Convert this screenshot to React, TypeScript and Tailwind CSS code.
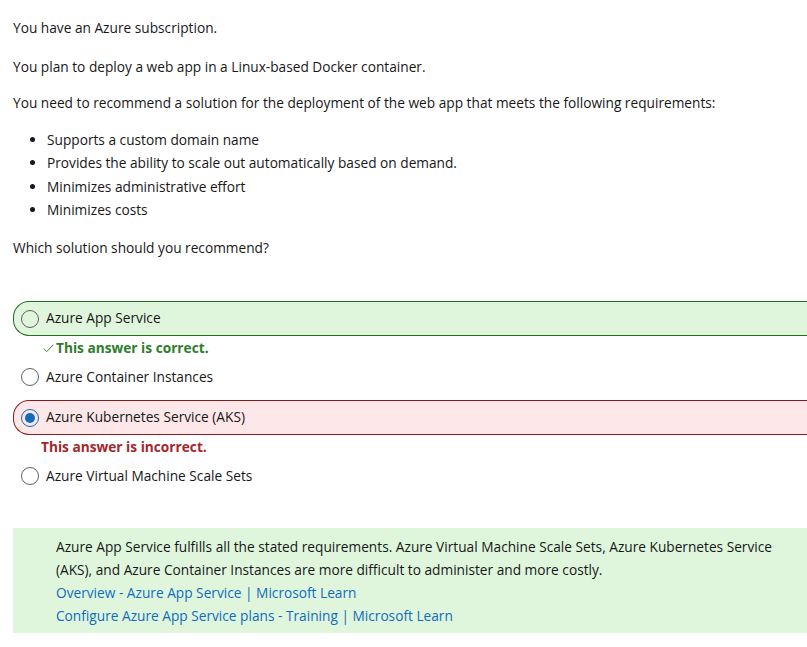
import { ReactNode } from 'react'

const requirements = [
  'Supports a custom domain name',
  'Provides the ability to scale out automatically based on demand.',
  'Minimizes administrative effort',
  'Minimizes costs',
]

function Radio({ checked }: { checked?: boolean }) {
  if (checked) {
    return (
      <span className="flex justify-center items-center border-[1.5px] border-[#0f6cbd] rounded-full w-[18px] h-[18px] shrink-0">
        <span className="bg-[#0f6cbd] rounded-full w-[10px] h-[10px]" />
      </span>
    )
  }
  return <span className="border border-[#616161] rounded-full w-[18px] h-[18px] shrink-0" />
}

function Option({ label, checked, className }: { label: string; checked?: boolean; className?: string }) {
  return (
    <div className={`flex flex-row items-center gap-[7px] ${className ?? ''}`}>
      <Radio checked={checked} />
      <span>{label}</span>
    </div>
  )
}

function Feedback({ children, className }: { children: ReactNode; className?: string }) {
  return (
    <div className={`flex flex-row items-center h-[24px] font-bold ${className ?? ''}`}>
      {children}
    </div>
  )
}

export default function App() {
  return (
    <div
      className="bg-white pt-[18px] pl-[13px] w-[807px] h-[647px] overflow-hidden text-[#171717] text-[13.7px]"
      style={{ fontFamily: '"Open Sans", "Noto Sans", sans-serif' }}>

      <p className="mb-[19px] leading-5">You have an Azure subscription.</p>
      <p className="mb-[16px] leading-5">You plan to deploy a web app in a Linux-based Docker container.</p>
      <p className="mb-[15px] leading-5">
        You need to recommend a solution for the deployment of the web app that meets the following requirements:
      </p>

      <ul className="mb-[17px] pl-[34px] list-disc">
        {requirements.map(r => (
          <li key={r} className="leading-[23.3px]">{r}</li>
        ))}
      </ul>

      <p className="mb-[43px] leading-5">Which solution should you recommend?</p>

      {/* answers */}
      <div className="flex flex-col">
        <Option
          label="Azure App Service"
          className="bg-[#dff6dd] pl-[7px] border border-[#1f6f1f] border-r-0 rounded-l-[16px] h-[35px]" />
        <Feedback className="pl-[30px] text-[#2d7d2d]">
          <svg width="11" height="9" viewBox="0 0 11 9" className="mr-[2px]">
            <path d="M0.8 4.6 L3.8 7.6 L10.2 0.8" fill="none" stroke="#2d7d2d" strokeWidth="1" />
          </svg>
          This answer is correct.
        </Feedback>
        <Option label="Azure Container Instances" className="mb-[6px] pl-[8px] h-[34px]" />
        <Option
          label="Azure Kubernetes Service (AKS)"
          checked
          className="bg-[#fde7e9] pl-[7px] border border-[#8e1b1b] border-r-0 rounded-l-[16px] h-[35px]" />
        <Feedback className="pl-[28px] text-[#a4262c]">This answer is incorrect.</Feedback>
        <Option label="Azure Virtual Machine Scale Sets" className="pl-[8px] h-[34px]" />
      </div>

      {/* explanation */}
      <div className="bg-[#dff6dd] mt-[35px] pt-[7px] pr-[10px] pb-[6px] pl-[43px] leading-[23px]">
        <p>
          Azure App Service fulfills all the stated requirements. Azure Virtual Machine Scale Sets, Azure Kubernetes Service
          (AKS), and Azure Container Instances are more difficult to administer and more costly.
        </p>
        <a className="block text-[#0f6cbd]" href="#">Overview - Azure App Service | Microsoft Learn</a>
        <a className="block text-[#0f6cbd]" href="#">Configure Azure App Service plans - Training | Microsoft Learn</a>
      </div>
    </div>
  )
}
